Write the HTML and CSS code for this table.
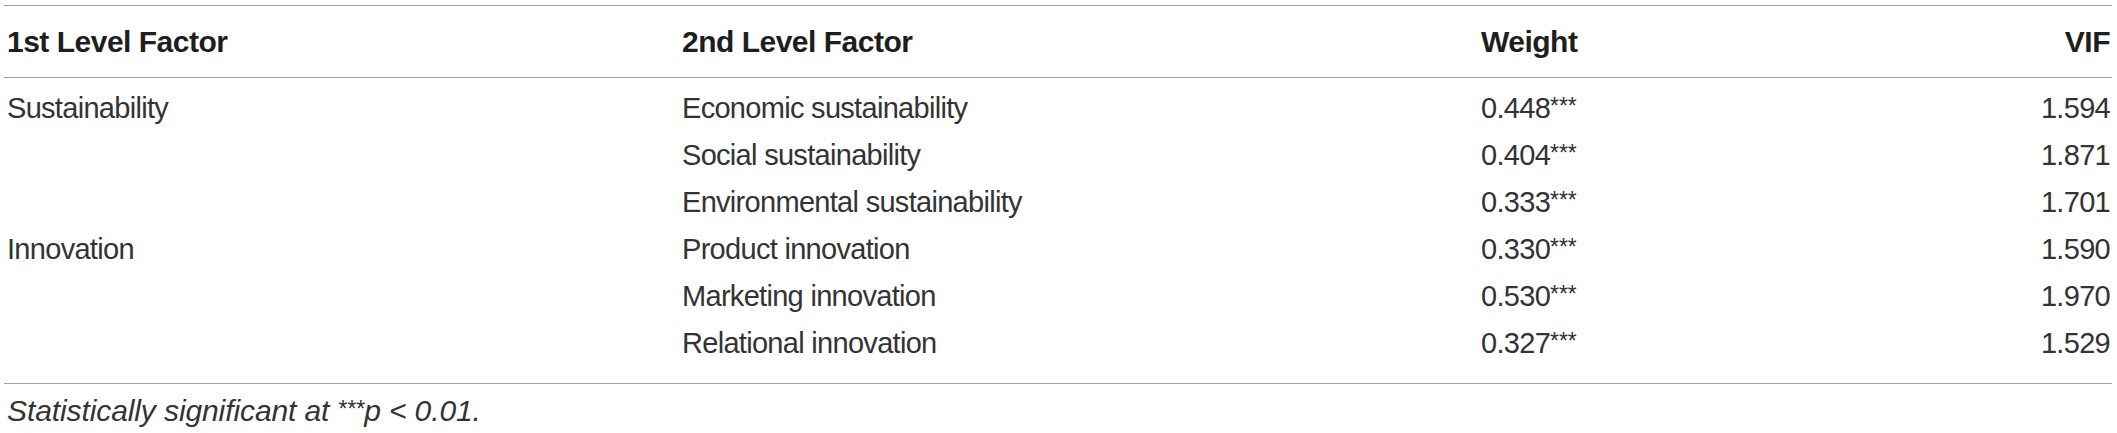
FILE: index.html
```html
<!DOCTYPE html>
<html lang="en">
<head>
<meta charset="utf-8">
<title>Factor weights</title>
<link rel="stylesheet" href="styles.css">
</head>
<body>
<div class="table-wrap">
  <table class="factors">
    <colgroup>
      <col class="c1"><col class="c2"><col class="c3"><col class="c4">
    </colgroup>
    <thead>
      <tr>
        <th>1st Level Factor</th>
        <th>2nd Level Factor</th>
        <th>Weight</th>
        <th class="num">VIF</th>
      </tr>
    </thead>
    <tbody>
      <tr><td>Sustainability</td><td>Economic sustainability</td><td>0.448<span class="sig">***</span></td><td class="num">1.594</td></tr>
      <tr><td></td><td>Social sustainability</td><td>0.404<span class="sig">***</span></td><td class="num">1.871</td></tr>
      <tr><td></td><td>Environmental sustainability</td><td>0.333<span class="sig">***</span></td><td class="num">1.701</td></tr>
      <tr><td>Innovation</td><td>Product innovation</td><td>0.330<span class="sig">***</span></td><td class="num">1.590</td></tr>
      <tr><td></td><td>Marketing innovation</td><td>0.530<span class="sig">***</span></td><td class="num">1.970</td></tr>
      <tr><td></td><td>Relational innovation</td><td>0.327<span class="sig">***</span></td><td class="num">1.529</td></tr>
    </tbody>
  </table>
  <p class="note">Statistically significant at <span class="sig">***</span>p &lt; 0.01.</p>
</div>
</body>
</html>
```

FILE: styles.css
```css
html, body {
  margin: 0;
  padding: 0;
  background: #ffffff;
}

body {
  font-family: "Liberation Sans", Arial, Helvetica, sans-serif;
  color: #222222;
}

.table-wrap {
  margin: 5px 5px 0 4px;
}

.factors {
  width: 100%;
  table-layout: fixed;
  border-collapse: collapse;
}

.c1 { width: 675px; }
.c2 { width: 799px; }
.c3 { width: 400px; }
.c4 { width: auto; }

.factors th,
.factors td {
  padding: 0 2px 0 3px;
  text-align: left;
  vertical-align: middle;
  white-space: nowrap;
}

.factors th {
  font-size: 30px;
  font-weight: bold;
  letter-spacing: -0.5px;
  line-height: 71px;
  color: #1e1e1e;
  border-top: 1px solid #a2a2a2;
  border-bottom: 1px solid #a2a2a2;
}

.factors td {
  font-size: 29px;
  font-weight: normal;
  letter-spacing: -0.7px;
  line-height: 47px;
  color: #333333;
}

.factors tbody tr:first-child td {
  padding-top: 7px;
}

.factors tbody tr:last-child td {
  padding-bottom: 16px;
  border-bottom: 1px solid #a2a2a2;
}

.factors .num {
  text-align: right;
}

.sig {
  font-size: 23px;
  line-height: 1;
  vertical-align: 4px;
  letter-spacing: -0.1px;
}

.note {
  margin: 9px 0 0 3px;
  font-size: 30px;
  line-height: 36px;
  font-style: italic;
  letter-spacing: -0.1px;
  color: #333333;
}
```
